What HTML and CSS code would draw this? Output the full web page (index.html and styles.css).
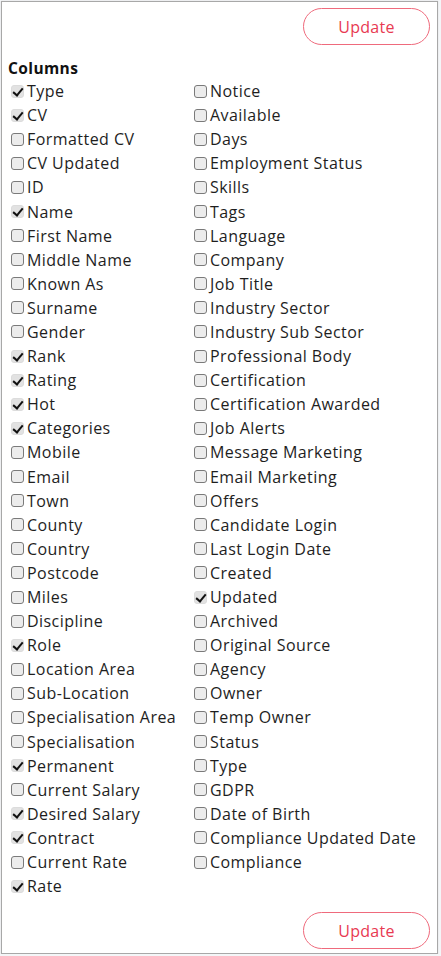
FILE: index.html
```html
<!DOCTYPE html>
<html lang="en">

<head>
    <meta charset="UTF-8">
    <title>Columns</title>

    <link rel="stylesheet" href="styles.css">
</head>

<body>
    <div class="panel">
        <div class="actions">
            <button class="btn-update" type="button">Update</button>
        </div>

        <h4 class="title">Columns</h4>

        <div class="columns">
            <div class="col">
                <label class="opt"><input type="checkbox" checked />Type</label>
                <label class="opt"><input type="checkbox" checked />CV</label>
                <label class="opt"><input type="checkbox" />Formatted CV</label>
                <label class="opt"><input type="checkbox" />CV Updated</label>
                <label class="opt"><input type="checkbox" />ID</label>
                <label class="opt"><input type="checkbox" checked />Name</label>
                <label class="opt"><input type="checkbox" />First Name</label>
                <label class="opt"><input type="checkbox" />Middle Name</label>
                <label class="opt"><input type="checkbox" />Known As</label>
                <label class="opt"><input type="checkbox" />Surname</label>
                <label class="opt"><input type="checkbox" />Gender</label>
                <label class="opt"><input type="checkbox" checked />Rank</label>
                <label class="opt"><input type="checkbox" checked />Rating</label>
                <label class="opt"><input type="checkbox" checked />Hot</label>
                <label class="opt"><input type="checkbox" checked />Categories</label>
                <label class="opt"><input type="checkbox" />Mobile</label>
                <label class="opt"><input type="checkbox" />Email</label>
                <label class="opt"><input type="checkbox" />Town</label>
                <label class="opt"><input type="checkbox" />County</label>
                <label class="opt"><input type="checkbox" />Country</label>
                <label class="opt"><input type="checkbox" />Postcode</label>
                <label class="opt"><input type="checkbox" />Miles</label>
                <label class="opt"><input type="checkbox" />Discipline</label>
                <label class="opt"><input type="checkbox" checked />Role</label>
                <label class="opt"><input type="checkbox" />Location Area</label>
                <label class="opt"><input type="checkbox" />Sub-Location</label>
                <label class="opt"><input type="checkbox" />Specialisation Area</label>
                <label class="opt"><input type="checkbox" />Specialisation</label>
                <label class="opt"><input type="checkbox" checked />Permanent</label>
                <label class="opt"><input type="checkbox" />Current Salary</label>
                <label class="opt"><input type="checkbox" checked />Desired Salary</label>
                <label class="opt"><input type="checkbox" checked />Contract</label>
                <label class="opt"><input type="checkbox" />Current Rate</label>
                <label class="opt"><input type="checkbox" checked />Rate</label>
            </div>
            <div class="col">
                <label class="opt"><input type="checkbox" />Notice</label>
                <label class="opt"><input type="checkbox" />Available</label>
                <label class="opt"><input type="checkbox" />Days</label>
                <label class="opt"><input type="checkbox" />Employment Status</label>
                <label class="opt"><input type="checkbox" />Skills</label>
                <label class="opt"><input type="checkbox" />Tags</label>
                <label class="opt"><input type="checkbox" />Language</label>
                <label class="opt"><input type="checkbox" />Company</label>
                <label class="opt"><input type="checkbox" />Job Title</label>
                <label class="opt"><input type="checkbox" />Industry Sector</label>
                <label class="opt"><input type="checkbox" />Industry Sub Sector</label>
                <label class="opt"><input type="checkbox" />Professional Body</label>
                <label class="opt"><input type="checkbox" />Certification</label>
                <label class="opt"><input type="checkbox" />Certification Awarded</label>
                <label class="opt"><input type="checkbox" />Job Alerts</label>
                <label class="opt"><input type="checkbox" />Message Marketing</label>
                <label class="opt"><input type="checkbox" />Email Marketing</label>
                <label class="opt"><input type="checkbox" />Offers</label>
                <label class="opt"><input type="checkbox" />Candidate Login</label>
                <label class="opt"><input type="checkbox" />Last Login Date</label>
                <label class="opt"><input type="checkbox" />Created</label>
                <label class="opt"><input type="checkbox" checked />Updated</label>
                <label class="opt"><input type="checkbox" />Archived</label>
                <label class="opt"><input type="checkbox" />Original Source</label>
                <label class="opt"><input type="checkbox" />Agency</label>
                <label class="opt"><input type="checkbox" />Owner</label>
                <label class="opt"><input type="checkbox" />Temp Owner</label>
                <label class="opt"><input type="checkbox" />Status</label>
                <label class="opt"><input type="checkbox" />Type</label>
                <label class="opt"><input type="checkbox" />GDPR</label>
                <label class="opt"><input type="checkbox" />Date of Birth</label>
                <label class="opt"><input type="checkbox" />Compliance Updated Date</label>
                <label class="opt"><input type="checkbox" />Compliance</label>
            </div>
        </div>

        <div class="actions actions-bottom">
            <button class="btn-update" type="button">Update</button>
        </div>
    </div>
</body>

</html>
```

FILE: styles.css
```css
* {
    font-family: "Open Sans", Arial, Helvetica, sans-serif;
    box-sizing: border-box;
}

html,
body {
    padding: 0;
    margin: 0;
}

body {
    background-color: #f4f6f8;
    color: #1e1e1e;
}

.panel {
    width: 437px;
    height: 953px;
    margin: 1px 0 0 1px;
    padding: 6px 7px 4px 6px;
    background-color: white;
    border: 1px solid #a8a8a8;
    box-shadow: 0 0 1px #cfcfcf;
    display: flex;
    flex-direction: column;
}

.actions {
    display: flex;
    justify-content: flex-end;
}

.actions-bottom {
    margin-top: auto;
}

.btn-update {
    width: 127px;
    height: 37px;
    border: 1.5px solid #ef6a7c;
    border-radius: 19px;
    background-color: white;
    color: #e83a52;
    font-size: 16px;
    letter-spacing: 0.3px;
    cursor: pointer;
}

.title {
    margin: 13px 0 1px 0;
    font-size: 15.5px;
    line-height: 20px;
    font-weight: 700;
    letter-spacing: 0.4px;
    color: #111;
}

.columns {
    display: grid;
    grid-template-columns: 183px 1fr;
    padding-left: 3px;
}

.col {
    display: flex;
    flex-direction: column;
}

.opt {
    height: 24.1px;
    display: flex;
    align-items: center;
    gap: 3px;
    font-size: 16px;
    letter-spacing: 0.45px;
    white-space: nowrap;
}

.opt input {
    appearance: none;
    width: 13px;
    height: 13px;
    margin: 0;
    flex: none;
    position: relative;
    border: 1px solid #7a7a7a;
    border-radius: 3px;
    background-color: #ececec;
}

.opt input:checked {
    border-color: #dcdcdc;
    background-color: #e2e2e2;
}

.opt input:checked::after {
    content: "";
    position: absolute;
    left: 3px;
    top: 0px;
    width: 4px;
    height: 8px;
    border: solid #111;
    border-width: 0 2px 2px 0;
    transform: rotate(40deg);
}
```
